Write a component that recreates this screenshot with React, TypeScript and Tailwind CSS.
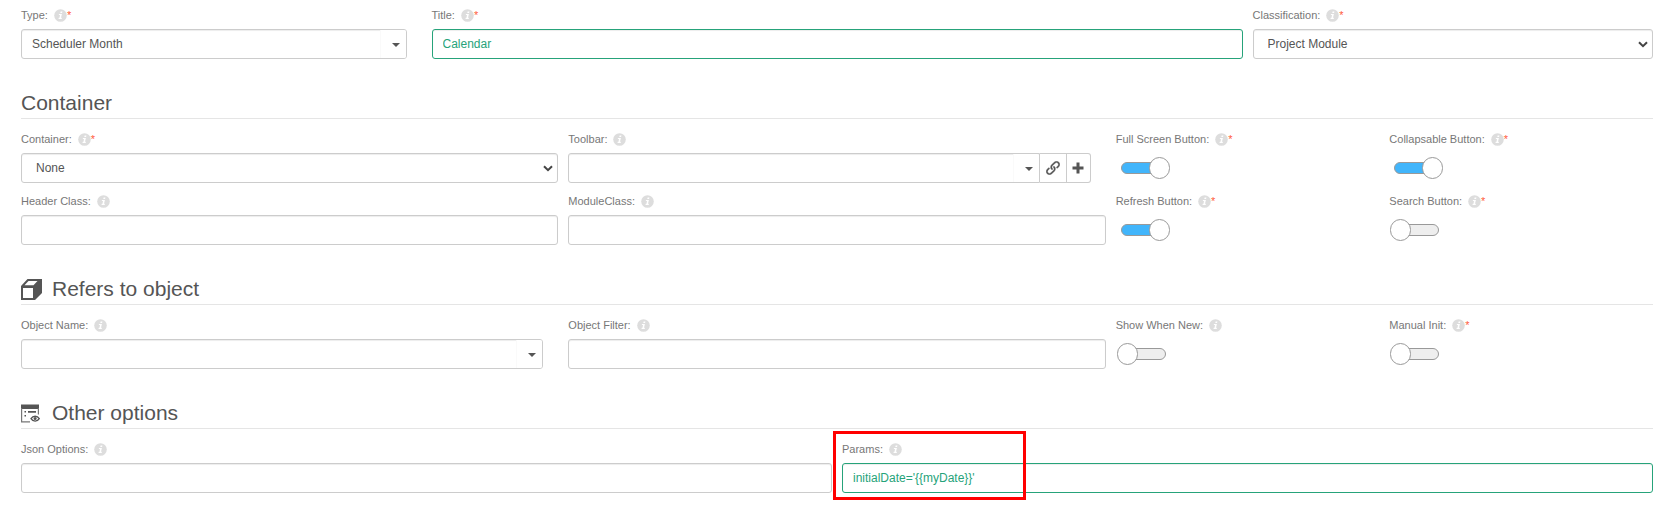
import { useId, type ReactNode } from "react";
import { ImLink } from "react-icons/im";

const control =
  "h-[30px] w-full rounded-[3px] border border-[#ccc] bg-white px-2.5 text-xs text-[#555] shadow-[inset_0_1px_1px_rgba(0,0,0,0.075)] outline-none";
const changedControl =
  "h-[30px] w-full rounded-[3px] border border-[#26a37a] bg-white px-2.5 text-xs text-[#26a37a] shadow-[inset_0_1px_1px_rgba(0,0,0,0.075)] outline-none";

function InfoIcon() {
  return (
    <svg viewBox="0 0 13 13" className="ml-1.5 size-[13px] shrink-0" aria-hidden="true">
      <circle cx="6.5" cy="6.5" r="6.3" fill="#ddd" />
      <path d="M6.6 2.5h1.8l-.3 1.5H6.3zM5 4.9h2.9L7 8.8h.9l-.2 1.1H4.5l.2-1.1h.8L6 6H4.8z" fill="#fff" />
    </svg>
  );
}

function PlusIcon() {
  return (
    <svg viewBox="0 0 12 12" className="size-3" aria-hidden="true">
      <path d="M4.5.5h3v4h4v3h-4v4h-3v-4h-4v-3h4z" fill="#555" />
    </svg>
  );
}

function Caret() {
  return (
    <svg viewBox="0 0 8 4" className="h-1 w-2" aria-hidden="true">
      <path d="M0 0h8L4 4z" fill="#555" />
    </svg>
  );
}

type FieldProps = {
  label: string;
  required?: boolean;
  span: string;
  children: (id: string) => ReactNode;
};

function Field({ label, required, span, children }: FieldProps) {
  const id = useId();
  return (
    <div className={`relative min-w-0 pb-2 ${span}`}>
      <div className="mb-1 flex h-5 items-center text-[11px] leading-5 text-[#777]">
        <label htmlFor={id} className="whitespace-nowrap">
          {label}
        </label>
        <InfoIcon />
        {required && <span className="text-[#ff5c3c]">*</span>}
      </div>
      {children(id)}
    </div>
  );
}

function NativeSelect({ id, value }: { id: string; value: string }) {
  return (
    <div className="relative">
      <select id={id} className={`${control} appearance-none pl-3.5`}>
        <option>{value}</option>
      </select>
      <svg
        viewBox="0 0 10 7"
        className="pointer-events-none absolute top-3 right-[5px] h-[7px] w-2.5"
        aria-hidden="true"
      >
        <path d="M1 1.2 5 5.2 9 1.2" fill="none" stroke="#444" strokeWidth="2" />
      </svg>
    </div>
  );
}

function ComboBox({ id, value = "", joined }: { id: string; value?: string; joined?: boolean }) {
  return (
    <div className="relative min-w-0 flex-1">
      <select id={id} className={`${control} appearance-none ${joined ? "rounded-r-none" : ""}`}>
        <option>{value}</option>
      </select>
      <span className="pointer-events-none absolute inset-y-px right-px flex w-[26px] items-center justify-end rounded-r-[2px] border-l border-[#fafafa] bg-white pt-px pr-1.5">
        <Caret />
      </span>
    </div>
  );
}

function Toggle({ id, on }: { id: string; on?: boolean }) {
  return (
    <div className="flex h-[30px] items-center pl-[5px]">
      <input
        id={id}
        type="checkbox"
        role="switch"
        defaultChecked={on}
        className="relative h-3 w-[45px] appearance-none rounded-full border border-[#999] bg-[#eee] before:absolute before:-top-1.5 before:-left-[5px] before:h-[22px] before:w-[21px] before:rounded-full before:border before:border-[#999] before:bg-white checked:bg-[#41b5fb] checked:before:left-[27px]"
      />
    </div>
  );
}

function SectionTitle({ icon, children }: { icon?: ReactNode; children: ReactNode }) {
  return (
    <h2 className="mb-2.5 flex h-[52px] items-end border-b border-[#e5e5e5] pb-[3px] text-[21px] leading-6 text-[#555]">
      {icon && <span className="flex h-6 w-[31px] items-center">{icon}</span>}
      {children}
    </h2>
  );
}

function CubeIcon() {
  return (
    <svg viewBox="0 0 21 21" className="size-[21px]" aria-hidden="true">
      <path
        fillRule="evenodd"
        fill="#555"
        d="M6.500 0H21v14l-7 7H0V7zM2 9v10h10V9zM7.500 2 3.500 6.300H12.500L16.500 2z"
      />
    </svg>
  );
}

function OptionsIcon() {
  return (
    <svg viewBox="0 0 19 19" className="size-[19px]" aria-hidden="true">
      <path fill="#555" d="M0 .5h18V5H0z" />
      <path d="M.6 4v13.900H9M17.400 4v6.500" fill="none" stroke="#777" strokeWidth="1.2" />
      <path fill="#555" d="M3.500 7h1.500v1.500H3.500zM7 7h8v1.800H7zM3.500 11h1.500v1.500H3.500z" />
      <path
        d="M10 14.700c2-3.300 6.300-3.300 8.300 0-2 3.300-6.300 3.300-8.300 0z"
        fill="#fff"
        stroke="#555"
        strokeWidth="1.3"
      />
      <circle cx="14.1" cy="14.6" r="1.5" fill="#555" />
    </svg>
  );
}

const row = "grid grid-cols-12 gap-x-2.5";

export default function App() {
  return (
    <form className="bg-white px-[21px] pt-[5px] font-['Liberation_Sans',Arial,sans-serif]">
      <div className={row}>
        <Field label="Type:" required span="col-span-3">
          {(id) => (
            <div className="flex pr-[15px]">
              <ComboBox id={id} value="Scheduler Month" />
            </div>
          )}
        </Field>
        <Field label="Title:" required span="col-span-6">
          {(id) => <input id={id} type="text" defaultValue="Calendar" className={changedControl} />}
        </Field>
        <Field label="Classification:" required span="col-span-3">
          {(id) => <NativeSelect id={id} value="Project Module" />}
        </Field>
      </div>

      <SectionTitle>Container</SectionTitle>
      <div className={row}>
        <Field label="Container:" required span="col-span-4">
          {(id) => <NativeSelect id={id} value="None" />}
        </Field>
        <Field label="Toolbar:" span="col-span-4">
          {(id) => (
            <div className="flex pr-[15px]">
              <ComboBox id={id} joined />
              <button
                type="button"
                aria-label="Open link"
                className="flex h-[30px] w-[27px] items-center justify-center border-y border-r border-[#ccc] text-[#555]"
              >
                <ImLink className="size-3.5" stroke="currentColor" strokeWidth="0.4" />
              </button>
              <button
                type="button"
                aria-label="Add"
                className="flex h-[30px] w-6 items-center justify-center rounded-r-[3px] border-y border-r border-[#ccc]"
              >
                <PlusIcon />
              </button>
            </div>
          )}
        </Field>
        <Field label="Full Screen Button:" required span="col-span-2">
          {(id) => <Toggle id={id} on />}
        </Field>
        <Field label="Collapsable Button:" required span="col-span-2">
          {(id) => <Toggle id={id} on />}
        </Field>
        <Field label="Header Class:" span="col-span-4">
          {(id) => <input id={id} type="text" className={control} />}
        </Field>
        <Field label="ModuleClass:" span="col-span-4">
          {(id) => <input id={id} type="text" className={control} />}
        </Field>
        <Field label="Refresh Button:" required span="col-span-2">
          {(id) => <Toggle id={id} on />}
        </Field>
        <Field label="Search Button:" required span="col-span-2">
          {(id) => <Toggle id={id} />}
        </Field>
      </div>

      <SectionTitle icon={<CubeIcon />}>Refers to object</SectionTitle>
      <div className={row}>
        <Field label="Object Name:" span="col-span-4">
          {(id) => (
            <div className="flex pr-[15px]">
              <ComboBox id={id} />
            </div>
          )}
        </Field>
        <Field label="Object Filter:" span="col-span-4">
          {(id) => <input id={id} type="text" className={control} />}
        </Field>
        <Field label="Show When New:" span="col-span-2">
          {(id) => <Toggle id={id} />}
        </Field>
        <Field label="Manual Init:" required span="col-span-2">
          {(id) => <Toggle id={id} />}
        </Field>
      </div>

      <SectionTitle icon={<OptionsIcon />}>Other options</SectionTitle>
      <div className={row}>
        <Field label="Json Options:" span="col-span-6">
          {(id) => <input id={id} type="text" className={control} />}
        </Field>
        <Field label="Params:" span="col-span-6">
          {(id) => (
            <>
              <input id={id} type="text" defaultValue="initialDate='{{myDate}}'" className={changedControl} />
              <span className="pointer-events-none absolute -top-2 -left-[9px] h-[69px] w-[193px] border-3 border-[#ff0000]" />
            </>
          )}
        </Field>
      </div>
    </form>
  );
}
